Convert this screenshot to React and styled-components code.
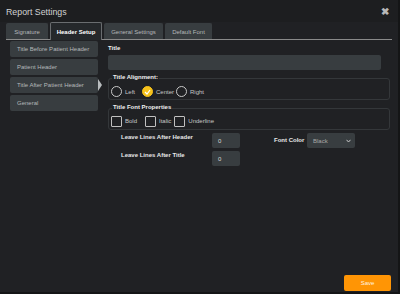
import React from "react";
import styled, { createGlobalStyle } from "styled-components";

const Global = createGlobalStyle`
  html, body { margin: 0; padding: 0; background: #202124; }
  body { font-family: "Liberation Sans", Arial, sans-serif; }
  * { box-sizing: border-box; }
`;

const Modal = styled.div`
  width: 400px;
  height: 294px;
  background: #202124;
  display: flex;
  flex-direction: column;
  border-right: 2px solid #141516;
  border-bottom: 2px solid #141516;
`;

const Header = styled.div`
  height: 22px;
  display: flex;
  align-items: center;
  justify-content: space-between;
  padding: 2px 9px 0 6px;
  background: #1d1e20;
`;

const Heading = styled.div`
  font-size: 8.8px;
  color: #d2d2d2;
`;

const Close = styled.div`
  font-size: 10px;
  font-weight: bold;
  color: #b8b8b8;
  line-height: 1;
`;

const Tabs = styled.div`
  display: flex;
  gap: 2px;
  margin: 0 6px 0 6px;
  border-bottom: 1px solid #8a8a8a;
  align-items: flex-end;
`;

const Tab = styled.div`
  height: ${(p) => (p.$active ? "18px" : "16px")};
  width: ${(p) => p.$w}px;
  display: flex;
  align-items: center;
  justify-content: center;
  font-size: 6px;
  color: ${(p) => (p.$active ? "#ffffff" : "#b4b8ba")};
  font-weight: ${(p) => (p.$active ? "bold" : "normal")};
  background: ${(p) => (p.$active ? "#25282b" : "#383d40")};
  border: 1px solid ${(p) => (p.$active ? "#6a6d70" : "#383d40")};
  border-bottom: none;
  border-radius: 2px 2px 0 0;
  margin-bottom: ${(p) => (p.$active ? "-1px" : "0")};
  white-space: nowrap;
`;

const Body = styled.div`
  display: flex;
  flex: 1;
  padding: 1px 0 0 10px;
`;

const Side = styled.div`
  width: 88px;
  display: flex;
  flex-direction: column;
  gap: 2px;
`;

const SideItem = styled.div`
  position: relative;
  height: 16px;
  padding-left: 7px;
  display: flex;
  align-items: center;
  font-size: 6px;
  color: #b4b8ba;
  background: #383d40;
  border-radius: 2px;
  white-space: nowrap;
  &::after {
    content: "";
    display: ${(p) => (p.$active ? "block" : "none")};
    position: absolute;
    right: -4px;
    top: 2px;
    border-top: 6px solid transparent;
    border-bottom: 6px solid transparent;
    border-left: 4px solid #b8bcbe;
  }
`;

const Content = styled.div`
  flex: 1;
  margin-left: 10px;
  padding-right: 8px;
  display: flex;
  flex-direction: column;
`;

const Label = styled.div`
  font-size: 6px;
  font-weight: bold;
  color: #f0f0f0;
  height: 11px;
  display: flex;
  align-items: center;
  margin-top: 1px;
`;

const TitleInput = styled.div`
  width: 273px;
  height: 15px;
  background: #383d40;
  border-radius: 2px;
  margin-top: 2px;
`;

const Fieldset = styled.div`
  position: relative;
  margin-top: ${(p) => p.$mt}px;
  height: 22px;
  border: 1px solid #34373a;
  border-radius: 3px;
  padding: 0 2px;
  display: flex;
  align-items: center;
`;

const Legend = styled.div`
  position: absolute;
  left: 3px;
  top: -5px;
  font-size: 6px;
  font-weight: bold;
  color: #f0f0f0;
  background: #202124;
  padding: 0 1px;
  white-space: nowrap;
`;

const Options = styled.div`
  display: flex;
  align-items: center;
  margin-top: ${(p) => p.$mt || 0}px;
`;

const Radio = styled.div`
  width: 11px;
  height: 11px;
  border-radius: 50%;
  border: 1px solid ${(p) => (p.$checked ? "#f6c21b" : "#c8c8c8")};
  background: ${(p) => (p.$checked ? "#f6c21b" : "transparent")};
  display: flex;
  align-items: center;
  justify-content: center;
`;

const Box = styled.div`
  width: 11px;
  height: 11px;
  border: 1px solid #c0c0c0;
  border-radius: 1px;
`;

const OptText = styled.span`
  font-size: 6px;
  color: #c8c8c8;
  margin-left: 3px;
  margin-right: ${(p) => p.$mr}px;
  white-space: nowrap;
`;

const Row = styled.div`
  display: flex;
  align-items: flex-start;
  margin-top: ${(p) => p.$mt}px;
  padding-left: 13px;
`;

const RowLabel = styled.div`
  width: 91px;
  font-size: 6px;
  font-weight: bold;
  color: #e8e8e8;
  padding-top: 1px;
  white-space: nowrap;
`;

const NumBox = styled.div`
  width: 28px;
  height: 15px;
  background: #383d40;
  border-radius: 2px;
  font-size: 6px;
  color: #d8d8d8;
  display: flex;
  align-items: center;
  padding-left: 6px;
`;

const ColorLabel = styled.div`
  margin-left: 34px;
  width: 33px;
  font-size: 6px;
  font-weight: bold;
  color: #e8e8e8;
  white-space: nowrap;
  padding-top: 4px;
`;

const Select = styled.div`
  width: 48px;
  height: 15px;
  background: #383d40;
  border-radius: 2px;
  font-size: 6px;
  color: #a8a8a8;
  display: flex;
  align-items: center;
  justify-content: space-between;
  padding: 0 4px 0 6px;
`;

const Footer = styled.div`
  display: flex;
  justify-content: flex-end;
  padding: 0 7px 1px 0;
`;

const SaveButton = styled.div`
  width: 47px;
  height: 16px;
  background: #ff9505;
  border-radius: 2px;
  color: #fff4e0;
  font-size: 6px;
  display: flex;
  align-items: center;
  justify-content: center;
`;

export default function App() {
  return (
    <>
      <Global />
      <Modal>
        <Header>
          <Heading>Report Settings</Heading>
          <Close>✖</Close>
        </Header>
        <Tabs>
          <Tab $w={42}>Signature</Tab>
          <Tab $w={52} $active>Header Setup</Tab>
          <Tab $w={59}>General Settings</Tab>
          <Tab $w={47}>Default Font</Tab>
        </Tabs>
        <Body>
          <Side>
            <SideItem>Title Before Patient Header</SideItem>
            <SideItem>Patient Header</SideItem>
            <SideItem $active>Title After Patient Header</SideItem>
            <SideItem>General</SideItem>
          </Side>
          <Content>
            <Label>Title</Label>
            <TitleInput />
            <Fieldset $mt={8}>
              <Legend>Title Alignment:</Legend>
              <Options $mt={5}>
                <Radio />
                <OptText $mr={7}>Left</OptText>
                <Radio $checked>
                  <svg width="7" height="6" viewBox="0 0 7 6">
                    <path d="M1 3 L3 5 L6 1" stroke="#fff" strokeWidth="1.2" fill="none" />
                  </svg>
                </Radio>
                <OptText $mr={2}>Center</OptText>
                <Radio />
                <OptText $mr={0}>Right</OptText>
              </Options>
            </Fieldset>
            <Fieldset $mt={8}>
              <Legend>Title Font Properties</Legend>
              <Options $mt={4}>
                <Box />
                <OptText $mr={8}>Bold</OptText>
                <Box />
                <OptText $mr={3}>Italic</OptText>
                <Box />
                <OptText $mr={0}>Underline</OptText>
              </Options>
            </Fieldset>
            <Row $mt={3}>
              <RowLabel>Leave Lines After Header</RowLabel>
              <NumBox>0</NumBox>
              <ColorLabel>Font Color</ColorLabel>
              <Select>
                <span>Black</span>
                <svg width="5" height="4" viewBox="0 0 5 4">
                  <path d="M0.5 0.8 L2.5 3 L4.5 0.8" stroke="#c8c8c8" strokeWidth="1" fill="none" />
                </svg>
              </Select>
            </Row>
            <Row $mt={3}>
              <RowLabel>Leave Lines After Title</RowLabel>
              <NumBox>0</NumBox>
            </Row>
          </Content>
        </Body>
        <Footer>
          <SaveButton>Save</SaveButton>
        </Footer>
      </Modal>
    </>
  );
}
